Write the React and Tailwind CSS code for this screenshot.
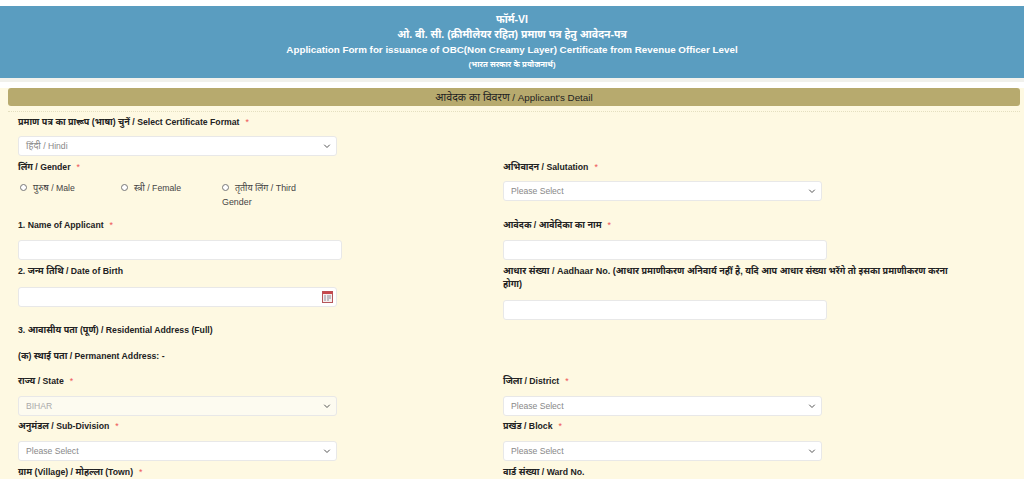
const font = { fontFamily: '"Liberation Sans", "Noto Sans", "Noto Sans Devanagari", sans-serif' };

// Devanagari runs sit a bit larger than the latin next to them
function Mixed({ text, big }) {
  const parts = text.split(/([\u0900-\u097F]+(?:[\s.,]+[\u0900-\u097F]+)*)/);
  return parts.map((p, i) =>
    /[\u0900-\u097F]/.test(p) ? <span key={i} className={big ? "text-[1.09em]" : "text-[1.04em]"}>{p}</span> : p
  );
}

function Label({ text, required, className = "" }) {
  return (
    <div className={`text-[8.7px] leading-[16px] font-bold text-[#222] ${className}`}>
      <Mixed text={text} />
      {required && <span className="ml-[6px] font-normal text-[#e55]">*</span>}
    </div>
  );
}

function Chevron() {
  return (
    <svg className="absolute right-[5px] top-1/2 -translate-y-1/2" width="8" height="8" viewBox="0 0 16 16" fill="none" stroke="#555" strokeWidth="2" strokeLinecap="round" strokeLinejoin="round">
      <path d="M3 6l5 5 5-5" />
    </svg>
  );
}

function SelectBox({ value = "Please Select", width = "w-[319px]", disabled }) {
  return (
    <div className={`relative flex h-[20px] ${width} items-center rounded-[3px] border border-[#e8e8e8] pl-[7px] pt-[1px] text-[8.6px] ${disabled ? "bg-[#fdfbf0] text-[#aaa]" : "bg-white text-[#888]"}`}>
      <span><Mixed text={value} big /></span>
      <Chevron />
    </div>
  );
}

function TextBox({ width = "w-[324px]", children }) {
  return (
    <div className={`relative h-[20px] ${width} rounded-[3px] border border-[#e8e8e8] bg-white`}>{children}</div>
  );
}

function Radio({ children, plain, className = "" }) {
  return (
    <div className={`leading-[14px] text-[#444] ${plain ? "text-[8.9px]" : "text-[8.7px]"} ${className}`}>
      <span className="mr-[6px] inline-block h-[7px] w-[7px] rounded-full border border-[#777] bg-white" />
      {plain ? children : <Mixed text={children} />}
    </div>
  );
}

function CalendarIcon() {
  return (
    <svg className="absolute right-[3px] top-[3px]" width="11" height="12" viewBox="0 0 11 12">
      <rect x="0.5" y="0.5" width="10" height="11" fill="#f6eeee" stroke="#b5565a" />
      <rect x="0.5" y="0.5" width="10" height="2.5" fill="#c8474c" />
      <path d="M2 5h2M5 5h4M2 7h2M5 7h4M2 9h2M5 9h2" stroke="#8d8d9a" />
    </svg>
  );
}

function Row({ className = "", children }) {
  return <div className={`grid grid-cols-[485px_1fr] ${className}`}>{children}</div>;
}

export default function App() {
  return (
    <div style={font} className="h-[479px] overflow-hidden bg-white pt-[6px]">
      <div className="flex h-[72px] flex-col items-center bg-[#5a9dc0] pt-[5px] text-white">
        <div className="text-[10.5px] leading-[16px] font-bold">फॉर्म-VI</div>
        <div className="text-[10.5px] leading-[14px] font-bold">ओ. बी. सी. (क्रीमीलेयर रहित) प्रमाण पत्र हेतु आवेदन-पत्र</div>
        <div className="mt-[1px] text-[9.8px] leading-[16px] font-bold">Application Form for issuance of OBC(Non Creamy Layer) Certificate from Revenue Officer Level</div>
        <div className="mt-[1px] text-[7.8px] leading-[12px] font-bold">(भारत सरकार के प्रयोजनार्थ)</div>
      </div>
      <div className="h-[4px] bg-[#f1f1ec]" />
      <div className="h-[397px] bg-[#fef9e2] pl-[18px]">
        <div className="-ml-[10px] mt-[6px] mr-[4px] flex h-[18px] items-center justify-center rounded-[3px] bg-[#b7aa6e] text-[9.8px] text-[#222]">
          <span><Mixed text="आवेदक का विवरण / Applicant's Detail" big /></span>
        </div>
        <div className="-ml-[10px] mt-[5px] mr-[4px] border-t border-dotted border-[#e4dfc0]" />

        <div className="mt-[2px]">
          <Label text="प्रमाण पत्र का प्रारूप (भाषा) चुनें / Select Certificate Format" required />
          <div className="mt-[6px]"><SelectBox value="हिंदी / Hindi" /></div>
        </div>

        <Row className="mt-[3px]">
          <div>
            <Label text="लिंग / Gender" required />
            <div className="mt-[6px] flex">
              <Radio className="w-[101px] pl-[2px]">पुरुष / Male</Radio>
              <Radio className="w-[101px] pl-[2px]">स्त्री / Female</Radio>
              <Radio plain className="w-[92px] pl-[2px]">तृतीय लिंग / Third Gender</Radio>
            </div>
          </div>
          <div>
            <Label text="अभिवादन / Salutation" required />
            <div className="mt-[6px]"><SelectBox /></div>
          </div>
        </Row>

        <Row className="mt-[8px]">
          <div>
            <Label text="1. Name of Applicant" required />
            <div className="mt-[7px]"><TextBox /></div>
          </div>
          <div>
            <Label text="आवेदक / आवेदिका का नाम" required />
            <div className="mt-[7px]"><TextBox /></div>
          </div>
        </Row>

        <Row className="mt-[3px]">
          <div>
            <Label text="2. जन्म तिथि / Date of Birth" />
            <div className="mt-[8px]">
              <TextBox width="w-[319px]"><CalendarIcon /></TextBox>
            </div>
          </div>
          <div>
            <div className="w-[452px] pt-[2px] text-[9.05px] leading-[13px] font-bold text-[#222]">
              आधार संख्या / Aadhaar No. (आधार प्रमाणीकरण अनिवार्य नहीं है, यदि आप आधार संख्या भरेंगे तो इसका प्रमाणीकरण करना होगा)
            </div>
            <div className="mt-[9px]"><TextBox /></div>
          </div>
        </Row>

        <Label text="3. आवासीय पता (पूर्ण) / Residential Address (Full)" className="mt-[2px]" />
        <Label text="(क) स्थाई पता / Permanent Address: -" className="mt-[10px]" />

        <Row className="mt-[9px]">
          <div>
            <Label text="राज्य / State" required />
            <div className="mt-[7px]"><SelectBox value="BIHAR" disabled /></div>
          </div>
          <div>
            <Label text="जिला / District" required />
            <div className="mt-[7px]"><SelectBox /></div>
          </div>
        </Row>

        <Row className="mt-[2px]">
          <div>
            <Label text="अनुमंडल / Sub-Division" required />
            <div className="mt-[7px]"><SelectBox /></div>
          </div>
          <div>
            <Label text="प्रखंड / Block" required />
            <div className="mt-[7px]"><SelectBox /></div>
          </div>
        </Row>

        <Row className="mt-[3px]">
          <Label text="ग्राम (Village) / मोहल्ला (Town)" required />
          <Label text="वार्ड संख्या / Ward No." />
        </Row>
      </div>
    </div>
  );
}
